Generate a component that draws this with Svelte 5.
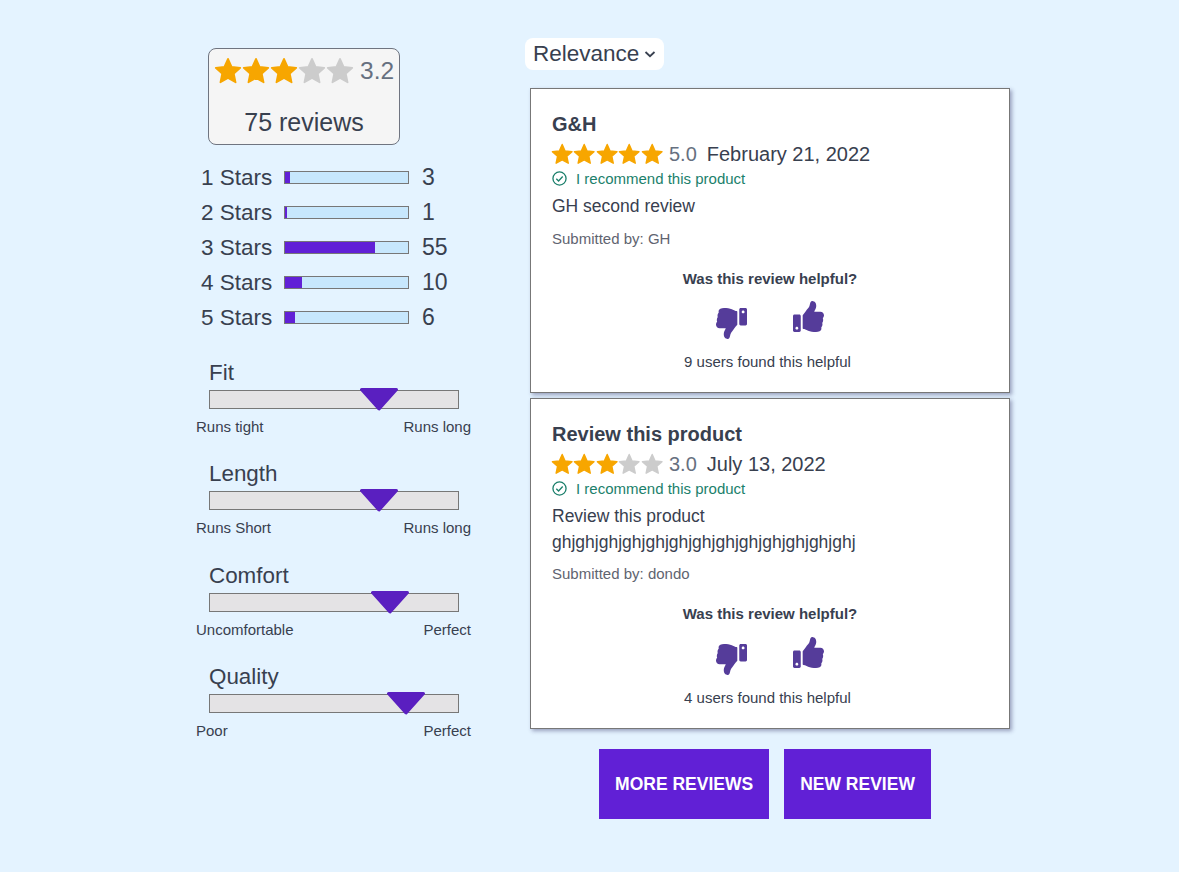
<script lang="ts">
  const starPath = "M12 1.6l3.1 6.9 7.4.8-5.5 5 1.5 7.4L12 18l-6.5 3.7L7 14.3l-5.5-5 7.4-.8z";
  const thumbPath = "M104 224H24c-13.255 0-24 10.745-24 24v240c0 13.255 10.745 24 24 24h80c13.255 0 24-10.745 24-24V248c0-13.255-10.745-24-24-24zM64 472c-13.255 0-24-10.745-24-24s10.745-24 24-24 24 10.745 24 24-10.745 24-24 24zM384 81.452c0 42.416-25.97 66.208-33.277 94.548h101.723c33.397 0 59.397 27.746 59.553 58.098.084 17.938-7.546 37.249-19.439 49.197l-.11.11c9.836 23.337 8.237 56.037-9.308 79.469 8.681 25.895-.069 57.704-16.382 74.757 4.298 17.598 2.244 32.575-6.148 44.632C440.202 511.587 389.616 512 346.839 512l-2.845-.001c-48.287-.017-87.806-17.598-119.56-31.725-15.957-7.099-36.821-15.887-52.651-16.178-6.54-.12-11.783-5.457-11.783-11.998v-213.77c0-3.2 1.282-6.271 3.558-8.521 39.614-39.144 56.648-80.587 89.117-113.111 14.804-14.832 20.188-37.236 25.393-58.902C282.515 39.293 291.817 0 312 0c24 0 72 8 72 81.452z";

  const breakdown = [
    { label: "1 Stars", count: 3, pct: 4 },
    { label: "2 Stars", count: 1, pct: 1.6 },
    { label: "3 Stars", count: 55, pct: 73 },
    { label: "4 Stars", count: 10, pct: 14 },
    { label: "5 Stars", count: 6, pct: 8 }
  ];

  const factors = [
    { name: "Fit", low: "Runs tight", high: "Runs long", pos: 68.2 },
    { name: "Length", low: "Runs Short", high: "Runs long", pos: 68.2 },
    { name: "Comfort", low: "Uncomfortable", high: "Perfect", pos: 72.7 },
    { name: "Quality", low: "Poor", high: "Perfect", pos: 79.2 }
  ];

  const reviews = [
    { title: "G&H", rating: 5, score: "5.0", date: "February 21, 2022", body: ["GH second review"], author: "GH", helpful: 9, tall: false },
    { title: "Review this product", rating: 3, score: "3.0", date: "July 13, 2022", body: ["Review this product", "ghjghjghjghjghjghjghjghjghjghjghjghjghj"], author: "dondo", helpful: 4, tall: true }
  ];
</script>

{#snippet stars(rating: number, size: number)}
  <span class="stars">
    {#each [1, 2, 3, 4, 5] as n}
      <svg width={size} height={size} viewBox="0 0 24 24" aria-hidden="true">
        <path d={starPath} fill={n <= rating ? "#f7a600" : "#cccccc"} stroke={n <= rating ? "#f7a600" : "#cccccc"} stroke-width="1.5" stroke-linejoin="round" />
      </svg>
    {/each}
  </span>
{/snippet}

<main class="page">
  <aside class="summary">
    <div class="score-card">
      <div class="score-top">
        {@render stars(3, 28)}
        <span class="score-num">3.2</span>
      </div>
      <div class="score-count">75 reviews</div>
    </div>

    <div class="breakdown">
      {#each breakdown as row}
        <div class="bar-row">
          <span class="bar-label">{row.label}</span>
          <span class="bar"><span class="bar-fill" style="width: {row.pct}%"></span></span>
          <span class="bar-count">{row.count}</span>
        </div>
      {/each}
    </div>

    <div class="factors">
      {#each factors as f}
        <div class="factor">
          <div class="factor-name">{f.name}</div>
          <div class="track">
            <svg class="marker" style="left: {f.pos}%" width="40" height="23" viewBox="0 0 40 23" aria-hidden="true">
              <path d="M2.5 1.5h35L20 21z" fill="#5a1fc0" stroke="#5a1fc0" stroke-width="3" stroke-linejoin="round" />
            </svg>
          </div>
          <div class="factor-ends"><span>{f.low}</span><span>{f.high}</span></div>
        </div>
      {/each}
    </div>
  </aside>

  <section class="reviews">
    <div class="sort">Relevance
      <svg width="12" height="12" viewBox="0 0 12 12" aria-hidden="true"><path d="M1.500 4l4.500 4.200L10.500 4" fill="none" stroke="#38404f" stroke-width="1.800" /></svg>
    </div>

    {#each reviews as r}
      <article class="review" class:tall={r.tall}>
        <h3>{r.title}</h3>
        <div class="meta">
          {@render stars(r.rating, 22.4)}
          <span class="meta-score">{r.score}</span>
          <span class="meta-date">{r.date}</span>
        </div>
        <div class="recommend">
          <svg width="15" height="15" viewBox="0 0 16 16" aria-hidden="true">
            <circle cx="8" cy="8" r="7" fill="none" stroke="#1b7f6b" stroke-width="1.400" />
            <path d="M4.600 8.200l2.400 2.400L11.400 5.800" fill="none" stroke="#1b7f6b" stroke-width="1.400" />
          </svg>
          <span>I recommend this product</span>
        </div>
        <div class="body">
          {#each r.body as line}<div>{line}</div>{/each}
        </div>
        <div class="author">Submitted by: {r.author}</div>
        <div class="helpful-q">Was this review helpful?</div>
        <div class="thumbs">
          <svg class="down" width="31" height="31" viewBox="0 0 512 512" aria-hidden="true">
            <path d={thumbPath} fill="#553c9a" transform="rotate(180 256 256)" />
          </svg>
          <svg width="31" height="31" viewBox="0 0 512 512" aria-hidden="true">
            <path d={thumbPath} fill="#553c9a" />
          </svg>
        </div>
        <div class="helpful-count">{r.helpful} users found this helpful</div>
      </article>
    {/each}

    <div class="actions">
      <button type="button">MORE REVIEWS</button>
      <button type="button">NEW REVIEW</button>
    </div>
  </section>
</main>

<style>
  :global(body) {
    background: #e4f3ff;
    color: #38404f;
    font-family: "Liberation Sans", Arial, sans-serif;
  }
  .page {
    display: flex;
    align-items: flex-start;
    min-height: 872px;
    box-sizing: border-box;
    padding: 38px 0 0 196px;
  }
  .summary { width: 334px; flex: none; }
  .score-card {
    width: 190px;
    height: 95px;
    margin: 10px 0 0 12px;
    background: #f5f5f5;
    border: 1px solid #6f7480;
    border-radius: 8px;
  }
  .score-top { display: flex; align-items: center; padding: 7px 0 0 6px; height: 30px; }
  .stars { display: inline-flex; line-height: 0; margin: 0 1px 0 -1px; }
  .score-num { font-size: 24.500px; color: #667080; margin-left: 5px; }
  .score-count { font-size: 25px; line-height: 29px; text-align: center; margin-top: 22px; }

  .breakdown { margin-top: 15px; margin-left: 5px; }
  .bar-row { display: flex; align-items: center; height: 35px; font-size: 22.500px; }
  .bar-label { width: 83px; }
  .bar {
    width: 123px;
    height: 11px;
    border: 1px solid #777;
    background: #c7e7fd;
    display: block;
  }
  .bar-fill { display: block; height: 100%; background: #6120d6; }
  .bar-count { margin-left: 13px; font-size: 23px; }

  .factors { margin-top: 24px; }
  .factor { height: 101.330px; }
  .factor-name { font-size: 22.400px; margin-left: 13px; line-height: 27px; }
  .track {
    position: relative;
    width: 248px;
    height: 17px;
    margin: 4px 0 0 13px;
    background: #e4e3e5;
    border: 1px solid #777;
  }
  .marker { position: absolute; top: -3px; margin-left: -20px; }
  .factor-ends {
    display: flex;
    justify-content: space-between;
    width: 275px;
    margin-top: 9px;
    font-size: 15px;
  }

  .reviews { width: 480px; flex: none; }
  .sort {
    display: inline-flex;
    align-items: center;
    gap: 5px;
    height: 32px;
    padding: 0 8px;
    margin-left: -5px;
    background: #fff;
    border-radius: 8px;
    font-size: 22.500px;
  }
  .review {
    width: 480px;
    height: 305px;
    background: #fff;
    border: 1px solid #777;
    box-shadow: 2px 2px 4px rgba(60, 60, 110, 0.45);
    margin: 5px 0 0;
    padding: 23px 0 0 21px;
    box-sizing: border-box;
  }
  .review:first-of-type { margin-top: 18px; }
  .review.tall { height: 331px; }
  h3 { font-size: 20px; margin: 0; line-height: 24px; }
  .meta { display: flex; align-items: center; margin-top: 6px; height: 24px; }
  .meta-score { font-size: 20px; color: #667080; margin-left: 5px; }
  .meta-date { font-size: 20px; margin-left: 10px; }
  .recommend {
    display: flex;
    align-items: center;
    gap: 9px;
    margin-top: 4px;
    height: 17px;
    font-size: 15px;
    color: #1b7f6b;
  }
  .body { font-size: 17.500px; line-height: 26px; margin-top: 5.500px; }
  .author { font-size: 15px; line-height: 17px; color: #5f6470; margin-top: 11.500px; }
  .tall .author { margin-top: 10.500px; }
  .helpful-q { font-weight: bold; font-size: 15px; line-height: 17px; text-align: center; margin: 23px 21px 0 0; }
  .thumbs { display: flex; align-items: flex-start; justify-content: center; gap: 46px; margin: 14px 21px 0 0; }
  .tall .thumbs { margin-top: 15px; }
  .down { margin-top: 7px; }
  .helpful-count { font-size: 15px; line-height: 17px; text-align: center; margin: 14px 26px 0 0; }
  .actions { display: flex; justify-content: center; gap: 15px; margin: 20px 10px 0 0; }
  button {
    height: 70px;
    padding: 0 16px;
    border: 0;
    background: #6120d6;
    color: #fff;
    font: bold 17.500px "Liberation Sans", Arial, sans-serif;
  }
</style>
